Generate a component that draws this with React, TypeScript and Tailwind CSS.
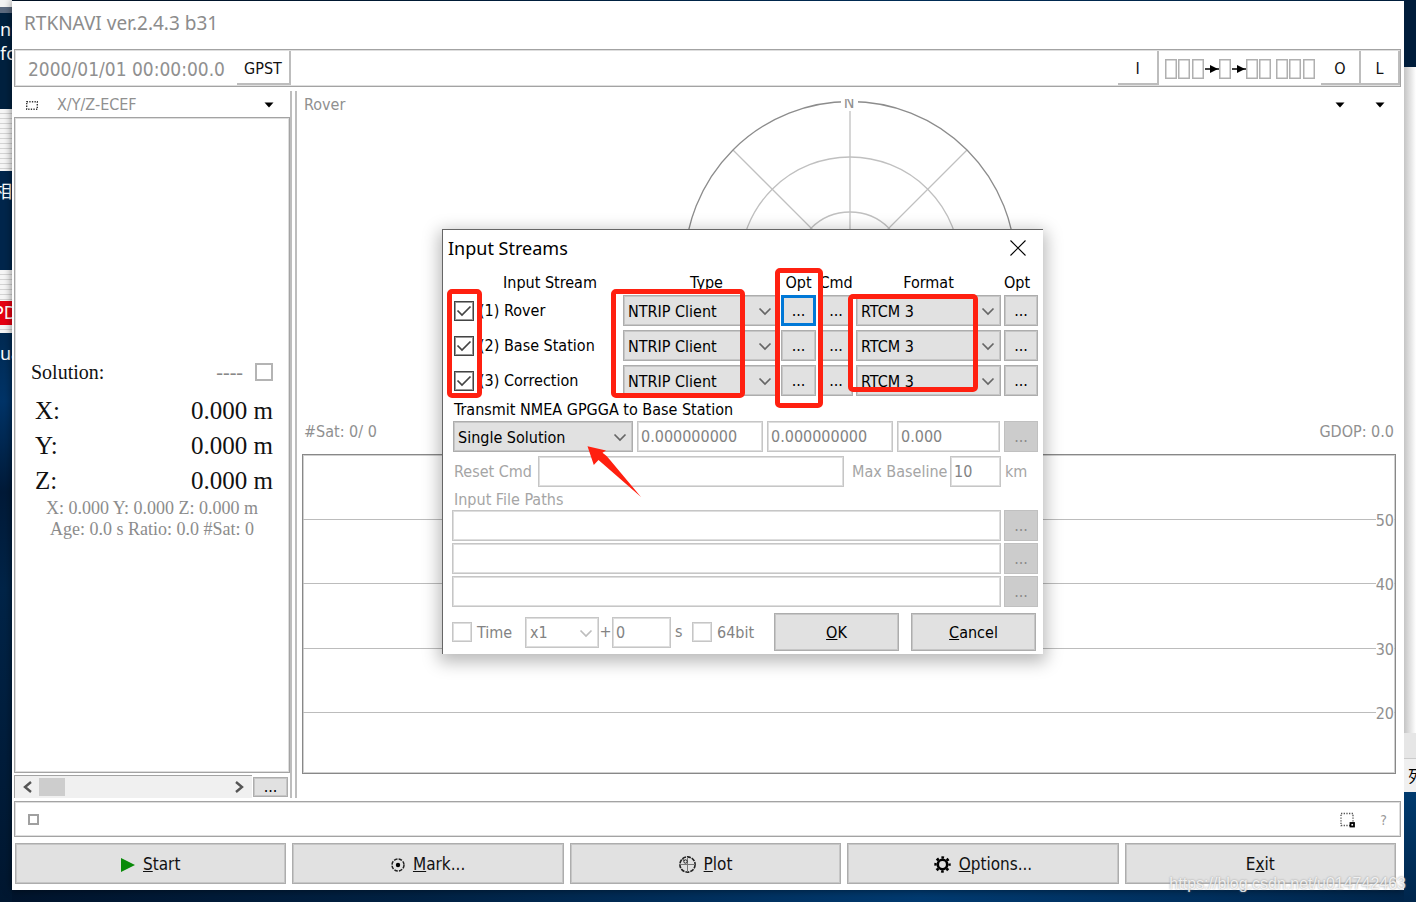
import type { ReactNode, SVGProps } from "react";

const frame = "border border-[#a3a3a3] shadow-[inset_0_0_0_1px_#dedede]";
const grayButton = "bg-[#e1e1e1] border border-[#adadad] shadow-[inset_0_0_0_1px_#c6c6c6]";
const tahoma = "font-['DejaVu_Sans_Condensed','DejaVu_Sans',sans-serif]";

function Caret() {
  return (
    <svg width="10" height="6" viewBox="0 0 10 6" aria-hidden="true">
      <path d="M0.5 0.5h9L5 5.5z" fill="#000" />
    </svg>
  );
}

function Chevron({ className = "" }: { className?: string }) {
  return (
    <svg width="14" height="9" viewBox="0 0 14 9" className={className} aria-hidden="true">
      <path d="M1.5 1.5L7 7l5.5-5.5" fill="none" stroke="currentColor" strokeWidth="1.7" />
    </svg>
  );
}

function DottedBox(props: SVGProps<SVGSVGElement>) {
  return (
    <svg width="16" height="16" viewBox="0 0 16 16" {...props}>
      <rect x="1" y="1.500" width="12" height="12" fill="none" stroke="#555" strokeWidth="1.300" strokeDasharray="1.300 1.370" />
      <rect x="10.500" y="11" width="3.500" height="3.500" fill="#fff" stroke="#000" strokeWidth="1.800" />
    </svg>
  );
}

function Drop({ label, value, className = "", disabled = false }: { label: string; value: string; className?: string; disabled?: boolean }) {
  return (
    <div className={`relative h-[31px] ${className}`}>
      <select
        aria-label={label}
        disabled={disabled}
        className={`h-full w-full appearance-none border pt-[2px] pl-1 opacity-100 ${disabled ? "border-[#c6c6c6] bg-white text-[#838383] shadow-[inset_0_0_0_1px_#dedede]" : "border-[#adadad] bg-[#e1e1e1] text-black shadow-[inset_0_0_0_1px_#c6c6c6]"}`}
      >
        <option>{value}</option>
      </select>
      <Chevron className={`pointer-events-none absolute top-3 right-[6px] ${disabled ? "text-[#bdbdbd]" : "text-[#666]"}`} />
    </div>
  );
}

function Dots({ label, disabled = false, focus = false, className = "w-[34px]" }: { label: string; disabled?: boolean; focus?: boolean; className?: string }) {
  const tone = disabled
    ? "border border-[#c0c0c0] bg-[#cccccc] text-[#8a8a8a]"
    : focus
      ? "border-[3px] border-[#0078d7] bg-[#e1e1e1]"
      : grayButton;
  return (
    <button aria-label={label} disabled={disabled} className={`h-[31px] shrink-0 leading-5 ${className} ${tone}`}>
      ...
    </button>
  );
}

function Field({ label, value = "", className = "" }: { label: string; value?: string; className?: string }) {
  return (
    <input
      aria-label={label}
      defaultValue={value}
      disabled
      className={`h-[31px] min-w-0 border border-[#c6c6c6] bg-white pl-[3px] text-[#838383] shadow-[inset_0_0_0_1px_#dedede] ${className}`}
    />
  );
}

function Check({ children, checked = false, className = "" }: { children: ReactNode; checked?: boolean; className?: string }) {
  return (
    <label className={`flex items-center gap-[5px] ${className}`}>
      <span className="relative size-5 shrink-0">
        <input
          type="checkbox"
          defaultChecked={checked}
          disabled={!checked}
          className="block size-5 appearance-none border border-[#c6c6c6] bg-white shadow-[inset_0_0_0_1px_#dedede] checked:border-[#444] checked:shadow-[inset_0_0_0_1px_#999]"
        />
        {checked && (
          <svg viewBox="0 0 20 20" className="pointer-events-none absolute inset-0 size-5" aria-hidden="true">
            <path d="M3.5 9.5L8 14l8.5-8.5" fill="none" stroke="#444" strokeWidth="1.7" />
          </svg>
        )}
      </span>
      <span className="pt-px">{children}</span>
    </label>
  );
}

function StreamDialog() {
  const streams = ["(1) Rover", "(2) Base Station", "(3) Correction"];
  return (
    <section
      role="dialog"
      aria-label="Input Streams"
      className="absolute top-[229px] left-[442px] w-[601px] border-t border-l border-[#666] bg-white pr-[5px] pb-[3px] pl-[9px] text-base text-black shadow-[0_5px_16px_3px_rgba(0,0,0,0.28)]"
    >
      <header className="-ml-1 flex h-[38px] items-center justify-between pb-[2px]">
        <h2 className="font-['Noto_Sans',sans-serif] text-lg">Input Streams</h2>
        <button aria-label="Close" className="mr-3">
          <svg width="16" height="16" viewBox="0 0 16 16">
            <path d="M0.5 0.5l15 15M15.5 0.5l-15 15" stroke="#000" strokeWidth="1.1" />
          </svg>
        </button>
      </header>

      <div className="grid grid-cols-[1fr_155px_35px_34px_145px_34px] gap-x-[3px]">
        <div className="col-span-6 grid h-[27px] grid-cols-subgrid items-center pt-[3px] text-center whitespace-nowrap">
          <span className="pl-7">Input Stream</span>
          <span className="pl-3">Type</span>
          <span>Opt</span>
          <span>Cmd</span>
          <span>Format</span>
          <span className="text-left">Opt</span>
        </div>
        <div className="col-span-6 grid grid-cols-subgrid gap-y-1">
          {streams.map((name, i) => (
            <div key={name} className="col-span-6 grid grid-cols-subgrid">
              <Check checked className="pl-[2px]">{name}</Check>
              <Drop label={`${name} type`} value="NTRIP Client" />
              <Dots label={`${name} type options`} focus={i === 0} className="w-full" />
              <Dots label={`${name} commands`} />
              <Drop label={`${name} format`} value="RTCM 3" />
              <Dots label={`${name} format options`} />
            </div>
          ))}
        </div>
      </div>

      <p className="flex h-[25px] items-center pt-[2px] pl-[2px]">Transmit NMEA GPGGA to Base Station</p>
      <div className="flex gap-1">
        <Drop label="Transmit mode" value="Single Solution" className="ml-px w-[180px]" />
        <Field label="Latitude" value="0.000000000" className="w-[126px]" />
        <Field label="Longitude" value="0.000000000" className="w-[126px]" />
        <Field label="Height" value="0.000" className="flex-1" />
        <Dots label="Select position" disabled />
      </div>

      <div className="mt-1 flex items-center text-[#a5a5a5]">
        <span className="w-[86px] pl-[2px]">Reset Cmd</span>
        <Field label="Reset Cmd" className="w-[306px]" />
        <span className="w-[106px] pl-2 whitespace-nowrap">Max Baseline</span>
        <Field label="Max Baseline" value="10" className="w-[51px]" />
        <span className="pt-px pl-1">km</span>
      </div>

      <p className="flex h-[23px] items-center pt-[2px] pl-[2px] text-[#a5a5a5]">Input File Paths</p>
      <div className="flex flex-col gap-[2px]">
        {[1, 2, 3].map((n) => (
          <div key={n} className="flex gap-[3px]">
            <Field label={`Input file path ${n}`} className="flex-1" />
            <Dots label={`Browse file ${n}`} disabled />
          </div>
        ))}
      </div>

      <div className="mt-[6px] flex h-[38px] items-center text-[#838383]">
        <Check className="w-[73px]">Time</Check>
        <Drop label="Speed" value="x1" disabled className="w-[74px]" />
        <span className="w-[13px] text-center">+</span>
        <Field label="Time offset" value="0" className="w-[59px]" />
        <span className="w-[21px] pl-1">s</span>
        <Check className="w-[82px]">64bit</Check>
        <button className={`h-[38px] w-[125px] pt-[2px] text-black ${grayButton}`}><u>O</u>K</button>
        <button className={`ml-3 h-[38px] w-[125px] pt-[2px] text-black ${grayButton}`}><u>C</u>ancel</button>
      </div>
    </section>
  );
}

function Annotations() {
  const box = "absolute rounded-[5px] border-[5px] border-[#ff2010]";
  return (
    <div className="pointer-events-none absolute top-0 left-0" aria-hidden="true">
      <div className={`${box} top-[289px] left-[447px] h-[109px] w-[35px]`} />
      <div className={`${box} top-[289px] left-[611px] h-[109px] w-[134px]`} />
      <div className={`${box} top-[268px] left-[775px] h-[140px] w-[48px]`} />
      <div className={`${box} top-[294px] left-[848px] h-[98px] w-[130px]`} />
      <svg width="54" height="52" viewBox="0 0 54 52" className="absolute top-[446px] left-[587px]">
        <path d="M0.5 0.300L19 4.500l-3.500 2.200q4 2.800 6.500 6L54 51 11.500 14l-4.700 5z" fill="#ff2010" />
      </svg>
    </div>
  );
}

function SkyPlot() {
  return (
    <svg width="336" height="336" viewBox="-168 -168 336 336" aria-label="Sky plot" role="img">
      <g fill="none" stroke="#c0c0c0" strokeWidth="1.300">
        <circle r="110" />
        <circle r="55" />
        <path d="M0-156V156M-156 0H156M-117-117L117 117M117-117L-117 117" />
      </g>
      <circle r="165.500" fill="none" stroke="#8c8c8c" strokeWidth="1.300" />
      <rect x="-9" y="-168" width="17" height="12" fill="#fff" />
      <text x="-1" y="-159" fontSize="16" fill="#909090" textAnchor="middle" className="font-['DejaVu_Sans_Condensed','DejaVu_Sans',sans-serif]">N</text>
    </svg>
  );
}

function StreamMonitor() {
  const cells = [0, 13, 27, 54, 81, 94, 111, 124, 138];
  return (
    <svg width="150" height="20" viewBox="0 0 150 20" aria-label="Stream status" role="img">
      {cells.map((x) => (
        <rect key={x} x={x + 0.75} y="0.750" width="10.500" height="18.500" fill="none" stroke="#b0b0b0" strokeWidth="1.500" />
      ))}
      <path d="M40 10h14M67 10h14" stroke="#000" strokeWidth="1.300" />
      <path d="M45 6l8 4-8 4zM72 6l8 4-8 4z" fill="#000" />
    </svg>
  );
}

function SolutionPanel() {
  const small = "text-center text-lg leading-[21px] whitespace-nowrap text-[#8c8c8c]";
  return (
    <aside className="flex w-[276px] shrink-0 flex-col">
      <div className="flex h-[30px] items-center pt-[6px] text-[#909090]">
        <svg width="12" height="9" viewBox="0 0 12 9" className="ml-3" aria-hidden="true">
          <rect x="0.700" y="0.700" width="10.600" height="7.600" fill="none" stroke="#333" strokeWidth="1.400" strokeDasharray="1.300 1.300" />
        </svg>
        <span className="ml-[19px]">X/Y/Z-ECEF</span>
        <button aria-label="Solution format" className="mr-4 ml-auto"><Caret /></button>
      </div>
      <div className={`flex flex-1 flex-col justify-center px-4 pt-2 font-['Liberation_Serif',serif] text-[#111] ${frame}`}>
        <div className="flex h-7 items-center">
          <span className="text-xl">Solution:</span>
          <span className="ml-auto text-xl text-[#888]">----</span>
          <span className="ml-3 size-[18px] border-2 border-[#b4b4b4]" />
        </div>
        <dl className="mt-[7px] text-[25px] leading-[35px]">
          {["X:", "Y:", "Z:"].map((axis) => (
            <div key={axis} className="flex justify-between pl-1">
              <dt>{axis}</dt>
              <dd>0.000 m</dd>
            </div>
          ))}
        </dl>
        <p className={small}>X: 0.000 Y: 0.000 Z: 0.000 m</p>
        <p className={small}>Age: 0.0 s Ratio: 0.0 #Sat: 0</p>
      </div>
      <div className="mt-[2px] flex h-[23px] items-center">
        <div className="flex h-full flex-1 items-center border-t border-l border-[#a3a3a3] bg-[#f0f0f0] px-2">
          <button aria-label="Scroll left">
            <svg width="9" height="12" viewBox="0 0 9 12"><path d="M8 1L2 6l6 5" fill="none" stroke="#555" strokeWidth="2.400" /></svg>
          </button>
          <div className="ml-[7px] h-[18px] w-[26px] bg-[#cdcdcd]" />
          <button aria-label="Scroll right" className="ml-auto">
            <svg width="9" height="12" viewBox="0 0 9 12"><path d="M1 1l6 5-6 5" fill="none" stroke="#555" strokeWidth="2.400" /></svg>
          </button>
        </div>
        <button aria-label="More" className={`mr-[2px] ml-px h-5 w-[35px] leading-4 ${grayButton}`}>...</button>
      </div>
    </aside>
  );
}

function RoverPanel() {
  return (
    <main className="flex min-w-0 flex-1 flex-col text-[#909090]">
      <div className="grid h-[367px]">
        <div className="col-start-1 row-start-1 flex justify-center pt-[12px]"><SkyPlot /></div>
        <div className="col-start-1 row-start-1 flex flex-col justify-between pt-[2px] pr-1 pb-[10px] pl-[6px]">
          <div className="flex h-8 items-center">
            <span>Rover</span>
            <button aria-label="Left plot" className="ml-auto"><Caret /></button>
            <button aria-label="Right plot" className="mr-3 ml-[30px]"><Caret /></button>
          </div>
          <div className="flex justify-between">
            <span>#Sat: 0/ 0</span>
            <span className="pr-[3px]">GDOP: 0.0</span>
          </div>
        </div>
      </div>
      <div className="mr-[5px] mb-6 ml-1 flex flex-1 flex-col border border-[#888] shadow-[inset_0_0_0_1px_#d0d0d0]">
        {["50", "40", "30", "20"].map((snr) => (
          <div key={snr} className="relative flex-1 border-b border-[#bcbcbc]">
            <span className="absolute right-px bottom-[-12px] bg-white leading-5">{snr}</span>
          </div>
        ))}
        <div className="h-[60px]" />
      </div>
    </main>
  );
}

function CommandBar() {
  const button = `flex h-[41px] flex-1 items-center justify-center gap-2 pt-[2px] text-[17px] text-[#111] ${grayButton}`;
  return (
    <nav className="mt-[6px] mr-[5px] mb-[6px] ml-px flex gap-[6px]">
      <button className={button}>
        <svg width="14" height="14" viewBox="0 0 14 14"><path d="M0 0l14 7-14 7z" fill="#0a8a0a" /></svg>
        <span><u>S</u>tart</span>
      </button>
      <button className={button}>
        <svg width="14" height="14" viewBox="0 0 14 14">
          <circle cx="7" cy="7" r="6" fill="none" stroke="#222" strokeWidth="1.500" strokeDasharray="3.500 1.200" />
          <circle cx="7" cy="7" r="2.200" fill="#000" />
        </svg>
        <span><u>M</u>ark...</span>
      </button>
      <button className={button}>
        <svg width="17" height="17" viewBox="0 0 17 17" fill="none" stroke="#222">
          <circle cx="8.500" cy="8.500" r="7.600" strokeWidth="1.600" strokeDasharray="4 1" />
          <path d="M8.500 1v15M1 8.500h15" stroke="#777" />
          <circle cx="6.500" cy="5.500" r="1.700" />
          <path d="M3.500 3.500l2 1" />
        </svg>
        <span><u>P</u>lot</span>
      </button>
      <button className={button}>
        <svg width="17" height="17" viewBox="0 0 17 17" fill="none" stroke="#000">
          <circle cx="8.500" cy="8.500" r="4.700" strokeWidth="2.600" />
          <circle cx="8.500" cy="8.500" r="7" strokeWidth="2.400" strokeDasharray="2.700 2.798" strokeDashoffset="1.350" />
        </svg>
        <span><u>O</u>ptions...</span>
      </button>
      <button className={button}><span>E<u>x</u>it</span></button>
    </nav>
  );
}

function LeftDesktop() {
  const paper = "bg-[repeating-linear-gradient(#f6f6f6_0_4px,#d4d4d4_4px_5px)]";
  const caption = "font-['Noto_Sans','Noto_Sans_CJK_SC',sans-serif] text-lg leading-6 text-white";
  return (
    <div className="flex w-3 shrink-0 flex-col overflow-hidden whitespace-nowrap">
      <div className="h-[7px] bg-[#f4f4f4]" />
      <div className="h-[6px] bg-[#5d6b80]" />
      <div className={`h-24 bg-[#00213f] pt-1 ${caption}`}>nn<br />fo</div>
      <div className={`h-[62px] ${paper}`} />
      <div className={`h-[99px] bg-[#00264c] pt-2 ${caption}`}><span className="-ml-[6px]">相</span></div>
      <div className={`h-[31px] ${paper}`} />
      <div className="flex h-6 items-center bg-[#e60012] font-['Liberation_Sans',sans-serif] text-lg text-white"><span className="-ml-2">PDF</span></div>
      <div className={`h-2 ${paper}`} />
      <div className={`flex-1 bg-[linear-gradient(#002a52,#003468_12%,#001a38_28%,#002448_45%,#001730)] pt-2 ${caption}`}>ua</div>
    </div>
  );
}

function RightDesktop() {
  return (
    <div className="flex w-3 shrink-0 flex-col overflow-hidden">
      <div className="h-[67px] bg-[#001d3b]" />
      <div className="h-[666px] bg-[linear-gradient(90deg,#c4c4c4,#fff)]" />
      <div className="h-[26px] border-b border-[#ccc] bg-[#e6e6e6]" />
      <div className="h-[33px] bg-[#f0f0f0] pl-1 font-['Noto_Sans_CJK_SC',sans-serif] text-base leading-8 text-black"><span className="whitespace-nowrap">列</span></div>
      <div className="flex-1 bg-[linear-gradient(#003a6e,#00264c)]" />
    </div>
  );
}

export default function App() {
  const tool = "flex h-[34px] items-center justify-center border-r-2 border-b-2 border-[#bdbdbd] pt-[3px] text-[#111]";
  return (
    <div className={`relative flex h-screen min-h-[860px] overflow-hidden bg-[linear-gradient(90deg,#00142c,#002244_30%,#003a70_65%,#00305e_85%,#00254a)] text-base ${tahoma}`}>
      <LeftDesktop />
      <div className="mt-px mb-3 flex min-w-0 flex-1 flex-col bg-white pr-[3px] pl-[2px] shadow-[0_0_8px_rgba(0,0,0,0.5)]">
        <h1 className="flex h-12 items-center pb-1 pl-[10px] font-['Noto_Sans',sans-serif] text-[19px] text-[#8c8c8c]">RTKNAVI ver.2.4.3 b31</h1>

        <div className={`flex h-[38px] shrink-0 items-start pt-px ${frame}`}>
          <span className="flex h-9 w-[222px] items-center pl-[13px] text-[19px] whitespace-nowrap text-[#909090]">2000/01/01 00:00:00.0</span>
          <button className={`w-[54px] ${tool}`}>GPST</button>
          <button className={`ml-auto w-[41px] ${tool}`}>I</button>
          <span className="mx-[6px] flex h-9 items-center"><StreamMonitor /></span>
          <button className={`w-10 ${tool}`}>O</button>
          <button className={`w-[39px] ${tool} border-r-0`}>L</button>
        </div>

        <div className="flex min-h-0 flex-1">
          <SolutionPanel />
          <div className="mt-1 mr-px w-[7px] border-x-2 border-[#bdbdbd]" />
          <RoverPanel />
        </div>

        <footer className={`mt-[3px] flex h-9 shrink-0 items-center pt-px ${frame}`}>
          <span className="ml-[13px] size-[11px] border-2 border-[#a0a0a0]" />
          <DottedBox className="ml-auto" aria-hidden="true" />
          <button aria-label="About" className="mr-[13px] ml-6 text-sm text-[#999]">?</button>
        </footer>
        <CommandBar />
      </div>
      <RightDesktop />

      <StreamDialog />
      <Annotations />
      <span className="pointer-events-none absolute right-[10px] bottom-2 font-['Liberation_Sans',sans-serif] text-base leading-5 text-white/80 [text-shadow:0_0_2px_#888]">
        https://blog.csdn.net/u014742463
      </span>
    </div>
  );
}
